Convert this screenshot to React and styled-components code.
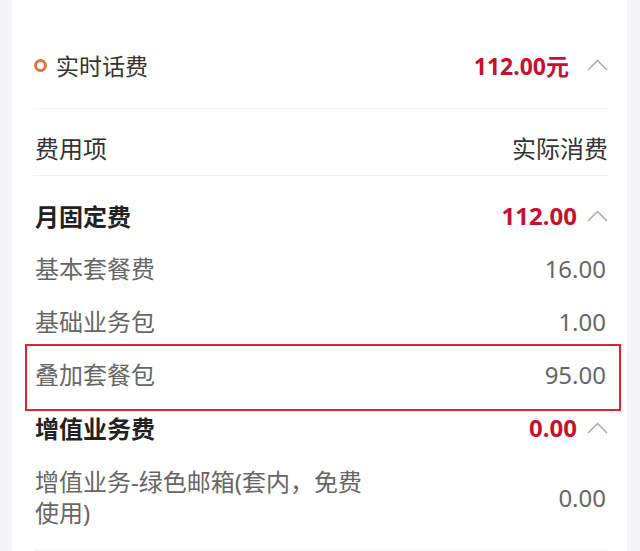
import React from "react";
import styled, { createGlobalStyle } from "styled-components";

const Global = createGlobalStyle`
  html, body { margin: 0; padding: 0; background: #f5f5f7; }
  body { font-family: "Noto Sans", "Noto Sans CJK SC", sans-serif; }
`;

const RED = "#c8102e";

const Card = styled.div`
  margin-left: 12px;
  width: 615px;
  box-sizing: border-box;
  background: #fff;
  padding: 22px 19px 0 21px;
  height: 551px;
  overflow: hidden;
`;

const TitleRow = styled.div`
  height: 86px;
  display: flex;
  align-items: center;
  justify-content: space-between;
  border-bottom: 1px solid #f0f0f0;
`;

const TitleLeft = styled.div`
  display: flex;
  align-items: center;
  gap: 9px;
  font-size: 23px;
  color: #333;
  padding-left: 1px;
`;

const Dot = styled.span`
  width: 7px;
  height: 7px;
  border: 3px solid #e8703a;
  border-radius: 50%;
`;

const Amount = styled.div`
  display: flex;
  align-items: center;
  gap: ${(p) => p.$gap || 10}px;
  color: ${RED};
  font-weight: 700;
  font-size: ${(p) => p.$size || 23}px;
`;

const Chevron = () => (
  <svg width="21" height="12" viewBox="0 0 21 12" fill="none">
    <polyline points="1,11 10.5,1.5 20,11" stroke="#aaaaaa" strokeWidth="1.5" />
  </svg>
);

const HeadRow = styled.div`
  display: flex;
  justify-content: space-between;
  font-size: 24px;
  color: #333;
  line-height: 31px;
  padding: 24px 0 11px 2px;
  border-bottom: 1px solid #f0f0f0;
`;

const Group = styled.div`
  padding-top: ${(p) => p.$top || 0}px;
`;

const GroupRow = styled.div`
  height: 53px;
  display: flex;
  align-items: center;
  justify-content: space-between;
  font-size: 24px;
  font-weight: 700;
  color: #222;
  padding-left: 2px;
`;

const ItemRow = styled.div`
  position: relative;
  min-height: 53px;
  display: flex;
  align-items: center;
  justify-content: space-between;
  font-size: 24px;
  color: #666;
  padding: ${(p) => (p.$wrap ? "12px 0 22px 2px" : "0 0 0 2px")};
  line-height: 31px;
  border-bottom: ${(p) => (p.$last ? "1px solid #f0f0f0" : "none")};
  ${(p) =>
    p.$highlight &&
    `
    &::after {
      content: "";
      position: absolute;
      left: -8px;
      right: -13px;
      top: -4px;
      bottom: -10px;
      border: 2px solid #e0252b;
      pointer-events: none;
    }
  `}
`;

const Label = styled.span`
  max-width: 340px;
`;

const Value = styled.span`
  padding-right: 2px;
`;

const groups = [
  {
    name: "月固定费",
    total: "112.00",
    items: [
      { label: "基本套餐费", value: "16.00" },
      { label: "基础业务包", value: "1.00" },
      { label: "叠加套餐包", value: "95.00", highlight: true },
    ],
  },
  {
    name: "增值业务费",
    total: "0.00",
    items: [{ label: "增值业务-绿色邮箱(套内，免费使用)", value: "0.00", wrap: true, last: true }],
  },
];

export default function App() {
  return (
    <>
      <Global />
      <Card>
        <TitleRow>
          <TitleLeft>
            <Dot />
            实时话费
          </TitleLeft>
          <Amount $gap={18}>
            <span>112.00元</span>
            <Chevron />
          </Amount>
        </TitleRow>
        <HeadRow>
          <span>费用项</span>
          <span>实际消费</span>
        </HeadRow>
        {groups.map((g, i) => (
          <Group key={g.name} $top={i === 0 ? 13 : 0}>
            <GroupRow>
              <span>{g.name}</span>
              <Amount $size={24}>
                <span>{g.total}</span>
                <Chevron />
              </Amount>
            </GroupRow>
            {g.items.map((it) => (
              <ItemRow key={it.label} $highlight={it.highlight} $wrap={it.wrap} $last={it.last}>
                <Label>{it.label}</Label>
                <Value>{it.value}</Value>
              </ItemRow>
            ))}
          </Group>
        ))}
      </Card>
    </>
  );
}
